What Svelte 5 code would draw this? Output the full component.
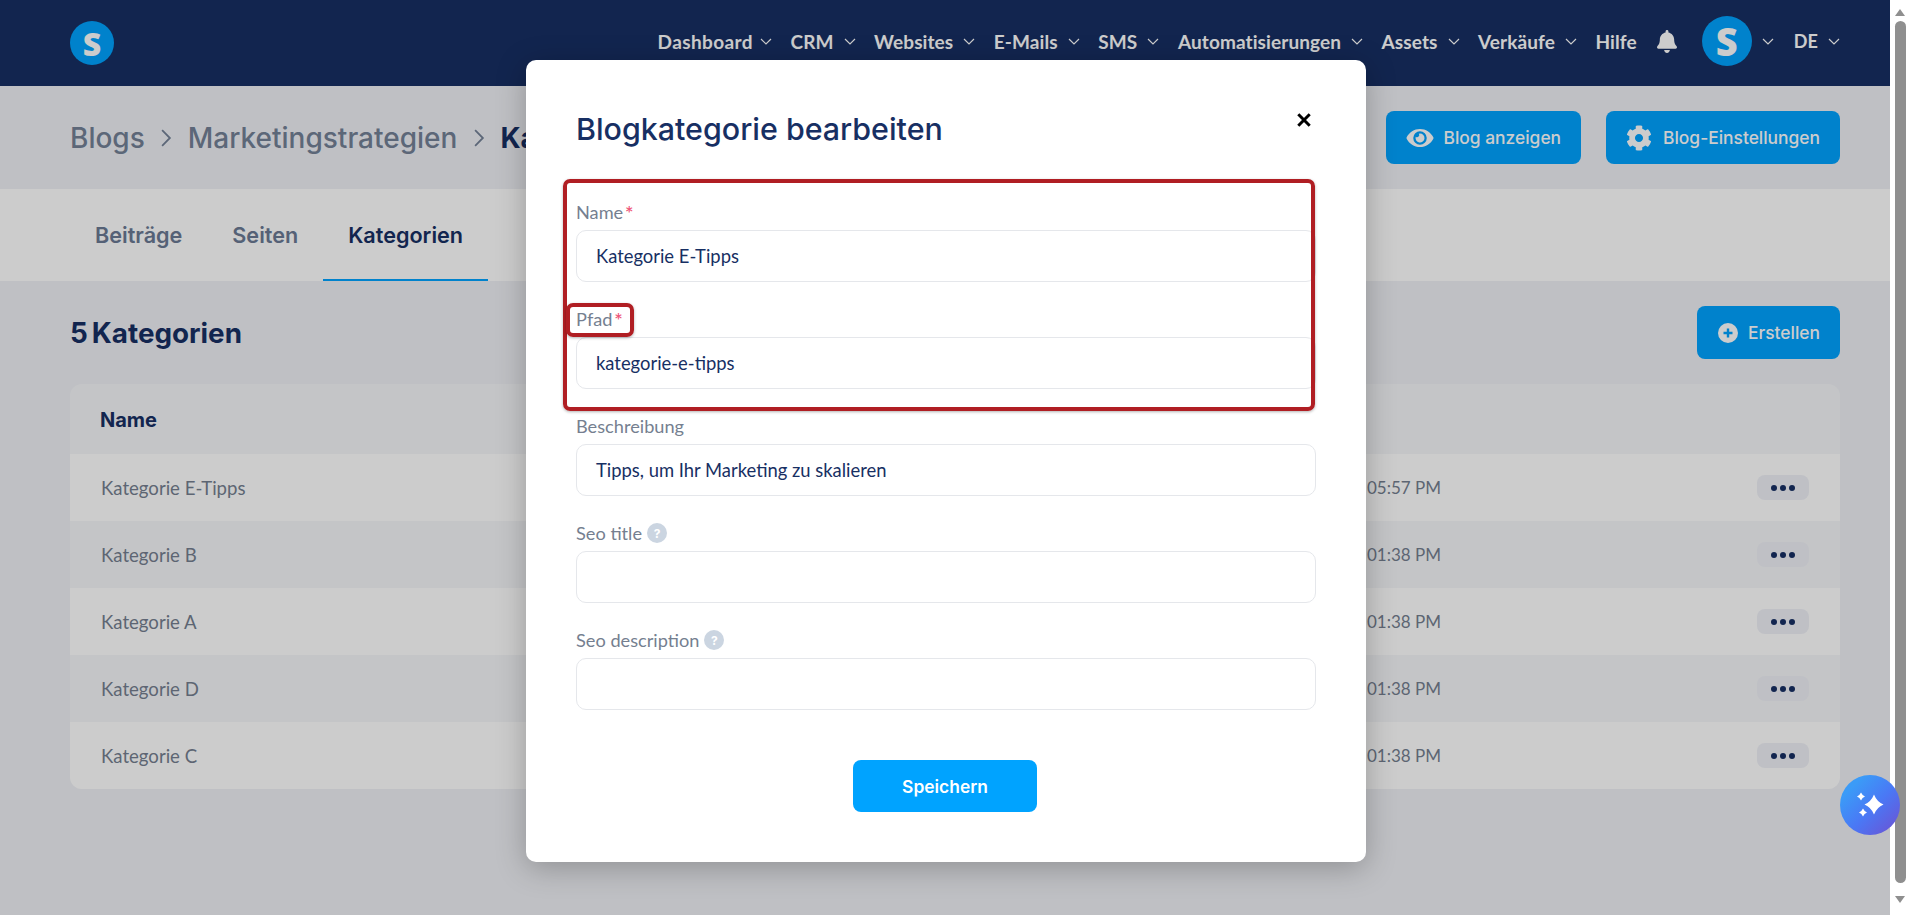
<script>
  const navItems = [
    { label: 'Dashboard', caret: true },
    { label: 'CRM', caret: true },
    { label: 'Websites', caret: true },
    { label: 'E-Mails', caret: true },
    { label: 'SMS', caret: true },
    { label: 'Automatisierungen', caret: true },
    { label: 'Assets', caret: true },
    { label: 'Verkäufe', caret: true },
    { label: 'Hilfe', caret: false },
  ];

  const rows = [
    { name: 'Kategorie E-Tipps', time: '05:57 PM' },
    { name: 'Kategorie B', time: '01:38 PM' },
    { name: 'Kategorie A', time: '01:38 PM' },
    { name: 'Kategorie D', time: '01:38 PM' },
    { name: 'Kategorie C', time: '01:38 PM' },
  ];

  const fields = [
    { label: 'Name', value: 'Kategorie E-Tipps', required: true },
    { label: 'Pfad', value: 'kategorie-e-tipps', required: true },
    { label: 'Beschreibung', value: 'Tipps, um Ihr Marketing zu skalieren' },
    { label: 'Seo title', value: '', help: true },
    { label: 'Seo description', value: '', help: true },
  ];
</script>

{#snippet caret()}
  <svg class="caret" viewBox="0 0 12 7" aria-hidden="true">
    <path d="M1 1l5 5 5-5" fill="none" stroke="currentColor" stroke-width="1.2" />
  </svg>
{/snippet}

<div class="screen">
  <div class="page">
    <header class="topbar">
      <div class="logo">S</div>
      <nav class="nav">
        {#each navItems as item}
          <span class="nav-item">
            {item.label}
            {#if item.caret}{@render caret()}{/if}
          </span>
        {/each}
        <svg class="bell" viewBox="0 0 448 512" aria-hidden="true">
          <path fill="currentColor" d="M224 512c35.32 0 63.97-28.65 63.97-64H160.03c0 35.35 28.65 64 63.97 64zm215.39-149.71c-19.32-20.76-55.47-51.99-55.47-154.29 0-77.7-54.48-139.9-127.94-155.16V32c0-17.67-14.32-32-31.98-32s-31.98 14.33-31.98 32v20.84C118.56 68.1 64.08 130.3 64.08 208c0 102.3-36.15 133.53-55.47 154.29-6 6.45-8.66 14.16-8.61 21.71.11 16.4 12.98 32 32.1 32h383.8c19.12 0 32-15.6 32.1-32 .05-7.55-2.61-15.27-8.61-21.71z" />
        </svg>
        <span class="nav-item avatar-wrap">
          <span class="avatar">S</span>
          {@render caret()}
        </span>
        <span class="nav-item lang">DE {@render caret()}</span>
      </nav>
    </header>

    <section class="titlebar">
      <div class="crumbs">
        <span>Blogs</span>
        <svg class="crumb-sep" viewBox="0 0 10 18" aria-hidden="true"><path d="M1.5 2l7 7-7 7" fill="none" stroke="currentColor" stroke-width="1.6" /></svg>
        <span>Marketingstrategien</span>
        <svg class="crumb-sep" viewBox="0 0 10 18" aria-hidden="true"><path d="M1.5 2l7 7-7 7" fill="none" stroke="currentColor" stroke-width="1.6" /></svg>
        <strong>Kategorien</strong>
      </div>
      <div class="actions">
        <button class="btn">
          <svg class="btn-icon eye" viewBox="0 0 576 512" aria-hidden="true">
            <path fill="currentColor" d="M572.52 241.4C518.29 135.59 410.93 64 288 64S57.68 135.64 3.48 241.41a32.35 32.35 0 0 0 0 29.19C57.71 376.41 165.07 448 288 448s230.32-71.64 284.52-177.41a32.35 32.35 0 0 0 0-29.19zM288 400a144 144 0 1 1 144-144 143.93 143.93 0 0 1-144 144zm0-240a95.31 95.31 0 0 0-25.31 3.79 47.85 47.85 0 0 1-66.9 66.9A95.78 95.78 0 1 0 288 160z" />
          </svg>
          Blog anzeigen
        </button>
        <button class="btn btn-gear">
          <svg class="btn-icon gear" viewBox="0 0 512 512" aria-hidden="true">
            <path fill="currentColor" d="M487.4 315.7l-42.6-24.6c4.3-23.2 4.3-47 0-70.2l42.6-24.6c4.9-2.8 7.1-8.6 5.5-14-11.1-35.6-30-67.8-54.7-94.6-3.8-4.1-10-5.1-14.8-2.3L380.8 110c-17.9-15.4-38.5-27.3-60.8-35.1V25.8c0-5.6-3.9-10.5-9.4-11.7-36.7-8.2-74.3-7.8-109.2 0-5.5 1.2-9.4 6.1-9.4 11.7V75c-22.2 7.9-42.8 19.8-60.8 35.1L88.7 85.5c-4.9-2.8-11-1.9-14.8 2.3-24.7 26.7-43.6 58.9-54.7 94.6-1.7 5.4.6 11.2 5.5 14L67.3 221c-4.3 23.2-4.3 47 0 70.2l-42.6 24.6c-4.9 2.8-7.1 8.6-5.5 14 11.1 35.6 30 67.8 54.7 94.6 3.8 4.1 10 5.1 14.8 2.3l42.6-24.6c17.9 15.4 38.5 27.3 60.8 35.1v49.2c0 5.6 3.9 10.5 9.4 11.7 36.7 8.2 74.3 7.8 109.2 0 5.5-1.2 9.4-6.1 9.4-11.7v-49.2c22.2-7.9 42.8-19.8 60.8-35.1l42.6 24.6c4.9 2.8 11 1.9 14.8-2.3 24.7-26.7 43.6-58.9 54.7-94.6 1.5-5.5-.7-11.3-5.6-14.1zM256 336c-44.1 0-80-35.9-80-80s35.9-80 80-80 80 35.9 80 80-35.9 80-80 80z" />
          </svg>
          Blog-Einstellungen
        </button>
      </div>
    </section>

    <div class="tabs">
      <span class="tab">Beiträge</span>
      <span class="tab">Seiten</span>
      <span class="tab active">Kategorien</span>
    </div>

    <main class="content">
      <div class="content-head">
        <h2>5 Kategorien</h2>
        <button class="btn btn-plus">
          <svg class="btn-icon plus" viewBox="0 0 20 20" aria-hidden="true">
            <circle cx="10" cy="10" r="10" fill="currentColor" />
            <path d="M10 5.5v9M5.5 10h9" stroke="#00a3ff" stroke-width="2.4" />
          </svg>
          Erstellen
        </button>
      </div>

      <div class="table">
        <div class="table-head">Name</div>
        {#each rows as row}
          <div class="table-row">
            <span>{row.name}</span>
            <span class="time">{row.time}</span>
            <span class="more"><i></i><i></i><i></i></span>
          </div>
        {/each}
      </div>
    </main>

    <div class="overlay">
      <div class="modal">
        <div class="modal-head">
          <h1>Blogkategorie bearbeiten</h1>
          <svg class="close" viewBox="0 0 14 14" aria-hidden="true">
            <path d="M2 2l10 10M12 2L2 12" stroke="#000" stroke-width="2.6" />
          </svg>
        </div>

        <form class="form">
          {#each fields as field}
            <div class="field">
              <div class="label">
                {field.label}{#if field.required}<span class="req">*</span>{/if}
                {#if field.help}<span class="help">?</span>{/if}
              </div>
              <div class="input">{field.value}</div>
            </div>
          {/each}
        </form>

        <button class="save">Speichern</button>

        <div class="mark mark-fields"></div>
        <div class="mark mark-label"></div>
      </div>
    </div>
  </div>

  <div class="scrollbar">
    <span class="arrow up"></span>
    <span class="thumb"></span>
    <span class="arrow down"></span>
  </div>

  <div class="assistant">
    <svg viewBox="0 0 60 60" width="60" height="60" aria-hidden="true">
      <path fill="#fff" d="M34 19.500Q36.800 26.700 43.500 29.500Q36.800 32.300 34 39.500Q31.200 32.300 24.500 29.500Q31.200 26.700 34 19.500z" />
      <path fill="#fff" d="M21 17.500Q22.200 20.300 25 21.500Q22.200 22.700 21 25.500Q19.800 22.700 17 21.500Q19.800 20.300 21 17.500z" />
      <path fill="#fff" d="M23 33.500Q24.200 36.300 27 37.500Q24.200 38.700 23 41.500Q21.800 38.700 19 37.500Q21.800 36.300 23 33.500z" />
    </svg>
  </div>
</div>

<style>
  :global(body) {
    margin: 0;
    font-family: Inter, "Liberation Sans", sans-serif;
  }

  .screen {
    position: relative;
    display: flex;
    width: 1910px;
    height: 915px;
    overflow: hidden;
    background: #fff;
  }

  .page {
    position: relative;
    width: 1890px;
    height: 915px;
    background: #eff1f6;
  }

  .topbar {
    display: flex;
    align-items: center;
    justify-content: space-between;
    height: 86px;
    padding: 0 50px 0 70px;
    background: #172f63;
  }

  .logo {
    display: flex;
    align-items: center;
    justify-content: center;
    width: 44px;
    height: 44px;
    border-radius: 50%;
    background: #00a3ff;
    color: #fff;
    font: 800 32px "Open Sans", sans-serif;
  }

  .nav {
    display: flex;
    align-items: center;
    gap: 18.5px;
    margin-top: -4px;
    color: #fff;
  }

  .nav-item {
    display: flex;
    align-items: center;
    gap: 10px;
    font: 700 19px Lato, sans-serif;
    letter-spacing: 0.1px;
    white-space: nowrap;
  }

  .nav-item:first-child {
    gap: 7px;
    letter-spacing: 0.4px;
  }

  .lang {
    margin-left: 1.5px;
    font-size: 18px;
  }

  .caret {
    width: 12px;
    height: 7px;
  }

  .bell {
    width: 20px;
    height: 23px;
    margin-left: 1.5px;
  }

  .avatar-wrap {
    margin-left: 6.5px;
  }

  .avatar {
    display: flex;
    align-items: center;
    justify-content: center;
    width: 50px;
    height: 50px;
    border-radius: 50%;
    background: #00a3ff;
    font: 800 38px "Open Sans", sans-serif;
  }

  .titlebar {
    display: flex;
    align-items: center;
    justify-content: space-between;
    height: 103px;
    padding: 0 50px 0 70px;
  }

  .crumbs {
    display: flex;
    align-items: center;
    gap: 15.5px;
    color: #748197;
    font-size: 28px;
    font-weight: 500;
  }

  .crumbs strong {
    color: #172f63;
    font-weight: 700;
  }

  .crumb-sep {
    width: 12px;
    height: 20px;
  }

  .actions {
    display: flex;
    gap: 25px;
  }

  .btn {
    display: flex;
    align-items: center;
    gap: 10px;
    height: 53px;
    padding: 0 20px;
    border: 0;
    border-radius: 8px;
    background: #00a3ff;
    color: #fff;
    font: 500 17.4px Inter, sans-serif;
  }

  .btn-gear {
    gap: 11px;
  }

  .btn-plus {
    padding-left: 21px;
  }

  .btn-icon {
    flex: none;
  }

  .eye {
    width: 28px;
    height: 24px;
  }

  .gear {
    width: 26px;
    height: 26px;
  }

  .plus {
    width: 20px;
    height: 20px;
  }

  .tabs {
    display: flex;
    height: 92px;
    padding-left: 70px;
    background: #fff;
  }

  .tab {
    display: flex;
    align-items: center;
    padding: 0 25px;
    color: #6b7a94;
    font-size: 21.6px;
    font-weight: 600;
  }

  .tab.active {
    color: #172f63;
    box-shadow: inset 0 -2px 0 #00a3ff;
  }

  .content {
    padding: 25px 50px 0 70px;
  }

  .content-head {
    display: flex;
    align-items: center;
    justify-content: space-between;
    margin-bottom: 25px;
  }

  .content-head h2 {
    margin: 0;
    color: #172f63;
    font-size: 27.8px;
    font-weight: 700;
    word-spacing: -2.5px;
  }

  .table {
    overflow: hidden;
    border-radius: 12px;
    background: #f6f7f9;
  }

  .table-head {
    display: flex;
    align-items: center;
    height: 70px;
    padding: 1px 0 0 30px;
    box-sizing: border-box;
    color: #172f63;
    font-size: 20px;
    font-weight: 700;
  }

  .table-row {
    display: grid;
    grid-template-columns: 1fr 390px 52px;
    align-items: center;
    height: 67px;
    padding: 0 31px;
    color: #757f90;
    font: 400 18.6px Lato, sans-serif;
  }

  .table-row:nth-child(even) {
    background: #fff;
  }

  .time {
    font-size: 17px;
  }

  .more {
    display: flex;
    align-items: center;
    justify-content: center;
    gap: 3px;
    height: 25px;
    border-radius: 8px;
    background: #eff1f7;
  }

  .more i {
    width: 6px;
    height: 6px;
    border-radius: 50%;
    background: #172f63;
  }

  .overlay {
    position: absolute;
    inset: 0;
    display: flex;
    justify-content: center;
    padding: 60px 0 0 2px;
    box-sizing: border-box;
    background: rgba(0, 0, 0, 0.2);
  }

  .modal {
    position: relative;
    box-sizing: border-box;
    width: 840px;
    height: 802px;
    padding: 50px;
    border-radius: 10px;
    background: #fff;
    box-shadow: 0 6px 30px rgba(0, 0, 0, 0.25);
  }

  .modal-head {
    display: flex;
    align-items: flex-start;
    justify-content: space-between;
    height: 90px;
  }

  .modal-head h1 {
    margin: 0;
    color: #172f63;
    font-size: 30.4px;
    line-height: 38px;
    font-weight: 500;
  }

  .close {
    width: 16px;
    height: 16px;
    margin: 2px 4px 0 0;
  }

  .field {
    margin-bottom: 25px;
  }

  .label {
    display: flex;
    align-items: center;
    gap: 3px;
    height: 24px;
    margin-bottom: 6px;
    color: #757f90;
    font: 400 18.2px Lato, sans-serif;
  }

  .req {
    margin-left: -1px;
    color: #ee5577;
    font: 400 16px/24px Inter, sans-serif;
  }

  .help {
    display: flex;
    align-items: center;
    justify-content: center;
    width: 20px;
    height: 20px;
    margin-left: 2px;
    border-radius: 50%;
    background: #cbd5e1;
    color: #fff;
    font: 700 12px Inter, sans-serif;
  }

  .input {
    box-sizing: border-box;
    height: 52px;
    padding: 0 19px;
    border: 1px solid #e5e7eb;
    border-radius: 10px;
    color: #172f63;
    font: 400 18.4px/50px Lato, sans-serif;
  }

  .save {
    display: block;
    width: 184px;
    height: 52px;
    margin: 50px 0 0 277px;
    border: 0;
    border-radius: 8px;
    background: #00a3ff;
    color: #fff;
    font: 600 17.4px Inter, sans-serif;
  }

  .mark {
    position: absolute;
    box-sizing: border-box;
    border: 4px solid #b01e23;
    border-radius: 7px;
    box-shadow: 0 1px 3px rgba(0, 0, 0, 0.3);
  }

  .mark-fields {
    left: 37px;
    top: 119px;
    width: 752px;
    height: 232px;
  }

  .mark-label {
    left: 40px;
    top: 243px;
    width: 68px;
    height: 34px;
  }

  .scrollbar {
    position: relative;
    display: flex;
    flex-direction: column;
    align-items: center;
    width: 20px;
    height: 915px;
    background: #fff;
  }

  .thumb {
    width: 11px;
    height: 862px;
    margin-top: 5px;
    border-radius: 6px;
    background: #8f8f8f;
  }

  .arrow {
    width: 0;
    height: 0;
    border-left: 5px solid transparent;
    border-right: 5px solid transparent;
  }

  .arrow.up {
    margin-top: 9px;
    border-bottom: 7px solid #8f8f8f;
  }

  .arrow.down {
    margin-top: 13px;
    border-top: 7px solid #8f8f8f;
  }

  .assistant {
    position: absolute;
    left: 1840px;
    top: 775px;
    width: 60px;
    height: 60px;
    border-radius: 50%;
    background: linear-gradient(135deg, #3b9bf7 20%, #4a78f5 55%, #6f4fd0 100%);
  }
</style>
